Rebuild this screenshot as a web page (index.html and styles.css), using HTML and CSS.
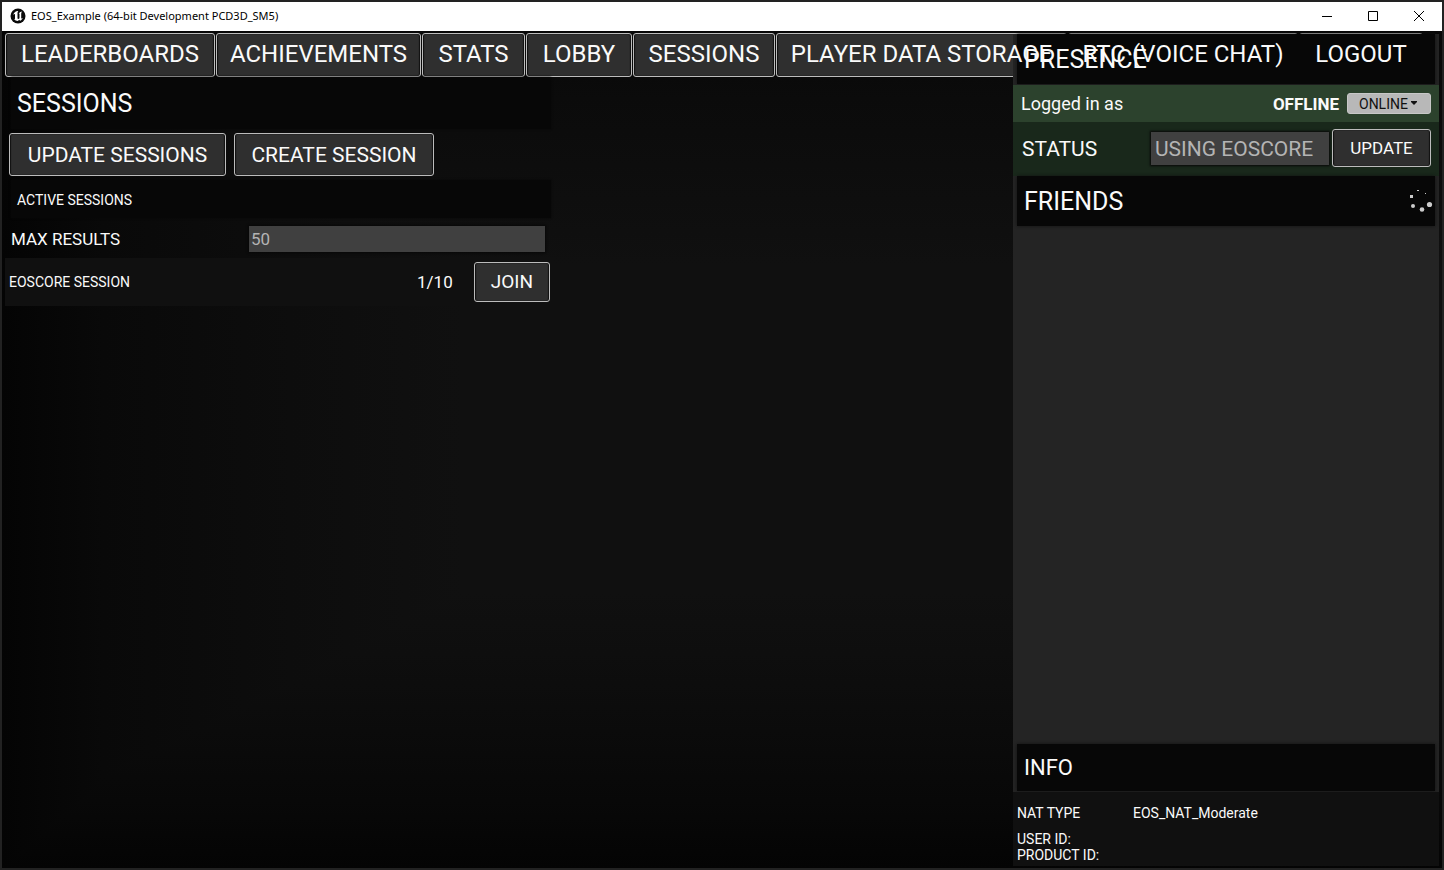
FILE: index.html
```html
<!DOCTYPE html>
<html lang="en">
<head>
<meta charset="utf-8">
<title>EOS_Example</title>
<link rel="stylesheet" href="styles.css">
</head>
<body>
<div class="window">
  <header class="titlebar">
    <svg class="logo" viewBox="0 0 16 16" width="16" height="16" aria-hidden="true">
      <circle cx="8" cy="8" r="7.5" fill="#0a0a0a"/>
      <path d="M7.3 2.9C5.2 3.5 3.6 5 3.1 6.9c.6-.7 1-1 1.4-1 .3 0 .5.3.5.7v4c0 .5-.4.6-1 .5.9 1.2 2.200 1.900 3.900 1.900l1.200-1.200 1.100.9c1.200-.6 2.100-1.600 2.600-2.900-.6.600-1 .8-1.300.7-.3-.1-.3-.3-.3-.6V5.800c0-1 .3-1.700 1-2.300-1.300.2-2.600.8-3.500 1.900.5 0 .8.100.8.600v4.300c-.4.500-.8.700-1.200.7-.5 0-.8-.2-.8-.7V5.200c0-1 .2-1.700.8-2.300z" fill="#fff"/>
    </svg>
    <span class="title">EOS_Example (64-bit Development PCD3D_SM5)</span>
    <div class="caption-buttons">
      <button class="caption" aria-label="Minimize"><svg width="10" height="10" viewBox="0 0 10 10"><path d="M0 5.500h10" stroke="#000"/></svg></button>
      <button class="caption" aria-label="Maximize"><svg width="10" height="10" viewBox="0 0 10 10"><path d="M.5.5h9v9h-9z" fill="none" stroke="#000"/></svg></button>
      <button class="caption" aria-label="Close"><svg width="10" height="10" viewBox="0 0 10 10"><path d="M0 0l10 10M10 0L0 10" stroke="#000"/></svg></button>
    </div>
  </header>

  <div class="screen">
    <nav class="tabs">
      <button class="btn tab"><span>LEADERBOARDS</span></button>
      <button class="btn tab"><span>ACHIEVEMENTS</span></button>
      <button class="btn tab"><span>STATS</span></button>
      <button class="btn tab"><span>LOBBY</span></button>
      <button class="btn tab"><span>SESSIONS</span></button>
      <button class="btn tab"><span>PLAYER DATA STORAGE</span></button>
      <button class="btn tab"><span>RTC (VOICE CHAT)</span></button>
      <button class="btn tab"><span>LOGOUT</span></button>
    </nav>

    <main class="content">
      <h1 class="bar bar-large">SESSIONS</h1>
      <div class="actions">
        <button class="btn action">UPDATE SESSIONS</button>
        <button class="btn action">CREATE SESSION</button>
      </div>
      <h2 class="bar bar-small">ACTIVE SESSIONS</h2>
      <div class="field">
        <label for="max">MAX RESULTS</label>
        <input class="box" id="max" type="text" value="50">
      </div>
      <div class="session">
        <span class="session-name">EOSCORE SESSION</span>
        <span class="session-count">1/10</span>
        <button class="btn join">JOIN</button>
      </div>
    </main>

    <aside class="side">
      <h2 class="head">PRESENCE</h2>
      <div class="login">
        <label class="who" for="presence">Logged in as</label>
        <strong class="state">OFFLINE</strong>
        <div class="picker">
          <select id="presence"><option>ONLINE</option><option>OFFLINE</option></select>
          <svg class="caret" width="6" height="4" viewBox="0 0 6 4" aria-hidden="true"><path d="M0 0h6v1L3 4 0 1z" fill="#111"/></svg>
        </div>
      </div>
      <div class="status">
        <label for="status">STATUS</label>
        <input class="box" id="status" type="text" value="USING EOSCORE">
        <button class="btn update">UPDATE</button>
      </div>
      <h2 class="head">FRIENDS
        <svg class="spinner" width="24" height="24" viewBox="0 0 24 24" aria-hidden="true" fill="#ccc">
          <circle cx="20.500" cy="15.500" r="2.600"/><circle cx="13" cy="20.500" r="2.300"/><circle cx="4" cy="17" r="2"/><rect x="1" y="6" width="3" height="3"/><rect x="8" y="1" width="2" height="1"/><rect x="16" y="4" width="1" height="1"/>
        </svg>
      </h2>
      <div class="friends"></div>
      <h2 class="head head-info">INFO</h2>
      <dl class="info">
        <div class="nat"><dt>NAT TYPE</dt><dd>EOS_NAT_Moderate</dd></div>
        <div><dt>USER ID:</dt></div>
        <div><dt>PRODUCT ID:</dt></div>
      </dl>
    </aside>
  </div>
</div>
</body>
</html>
```
FILE: styles.css
```css
* { box-sizing: border-box; }

body {
  margin: 0;
  background: #222;
  color: #fafafa;
  font-family: Roboto, "Liberation Sans", sans-serif;
}

button, input, select { font: inherit; color: inherit; }
h1, h2, dl, dd { margin: 0; font-weight: 400; }

.window {
  display: flex;
  flex-direction: column;
  min-height: 100vh;
  border: 2px solid #222;
  background: #050505;
}

.titlebar {
  display: flex;
  align-items: center;
  height: 29px;
  padding: 0 0 2px 8px;
  background: #fff;
  color: #000;
}
.title {
  flex: 1;
  margin-left: 5px;
  font: 11px/16px "Noto Sans", "Open Sans", sans-serif;
}
.caption-buttons { display: flex; }
.caption {
  display: grid;
  place-items: center;
  width: 46px;
  height: 26px;
  padding: 0;
  border: 0;
  background: none;
}

.screen {
  flex: 1;
  display: grid;
  grid-template-columns: minmax(0, 1fr) 426px;
  grid-template-rows: auto 1fr;
  padding: 2px 3px 2px 3px;
  background-color: #101010;
  background-image:
    linear-gradient(90deg, #040404, #090909 7%, #0d0d0d 20%, #101010 32%),
    linear-gradient(0deg, #040404, #080808 8%, #0d0d0d 22%, #101010 33%),
    linear-gradient(180deg, #080808, #0b0b0b 8%, #101010 28%);
  background-blend-mode: darken;
}

.btn {
  border: 1px solid #bcbcbc;
  border-radius: 3px;
  background: #2f2f2f;
  white-space: nowrap;
  box-shadow: inset 1px 0 1px #111, inset -1px 0 1px #111;
}

.tabs {
  grid-area: 1 / 1 / 2 / 3;
  display: grid;
  grid-template-columns: 210px 205px 103px 106px 142px 291px 230px 124px;
  gap: 1px;
}
.tab {
  height: 44px;
  padding: 0 0 2px;
  font-size: 24px;
  line-height: 28px;
}
/* Tab labels stay readable above the side panel */
.tab span { position: relative; z-index: 2; }

.content {
  grid-area: 2 / 1;
  width: 548px;
}
.bar {
  display: flex;
  align-items: center;
  margin: 0 2px 0 6px;
  padding: 0 6px;
  background: #070707;
  box-shadow: 0 0 2px #070707;
}
.bar-large { height: 52px; font-size: 25px; }
.bar-small { height: 38px; padding-top: 2px; font-size: 14px; }
.actions {
  display: grid;
  grid-template-columns: 217px 200px;
  gap: 8px;
  padding: 4px;
}
.action {
  height: 43px;
  padding: 0;
  font-size: 21px;
}
.field {
  display: grid;
  grid-template-columns: 238px 1fr;
  align-items: center;
  height: 40px;
  padding: 2px 8px 0 6px;
  font-size: 17px;
}
.box {
  min-width: 0;
  border: 0;
  border-radius: 0;
  background: #404040;
  color: #b4b4b4;
  box-shadow: 0 0 2px 1px #080808;
}
.field .box { height: 26px; padding: 0 2px; }
.session {
  display: flex;
  align-items: center;
  height: 48px;
  padding: 0 3px 0 4px;
  background: #101010;
}
.session-name { flex: 1; font-size: 14px; }
.session-count { margin-right: 21px; font-size: 17px; }
.join { height: 40px; padding: 0 16px 2px; font-size: 19px; }

.side {
  grid-area: 1 / 2 / 3 / 3;
  z-index: 1;
  display: flex;
  flex-direction: column;
  margin-top: 1px;
  background: #242424;
}
.head {
  display: flex;
  align-items: center;
  justify-content: space-between;
  height: 50px;
  margin: 0 4px;
  padding: 0 2px 0 7px;
  background: #070707;
  box-shadow: 0 0 3px #111;
  font-size: 25px;
}
.login {
  display: flex;
  align-items: center;
  height: 37px;
  margin-top: 1px;
  padding: 0 8px;
  background: #2c422d;
}
.who { flex: 1; font-size: 18px; }
.state { margin-right: 8px; font-size: 17px; font-weight: 700; }
.picker { position: relative; width: 84px; height: 21px; }
.picker select {
  appearance: none;
  width: 100%;
  height: 100%;
  padding: 0 11px;
  border: 1px solid #c8c8c8;
  border-radius: 3px;
  background: #b8b8b8;
  color: #111;
  font-size: 14px;
  line-height: 18px;
}
.caret { position: absolute; top: 8px; right: 14px; }
.status {
  display: flex;
  align-items: center;
  height: 54px;
  padding: 0 8px 2px 9px;
  background: #19281b;
  font-size: 21px;
}
.status label { flex: 1; padding-top: 2px; }
.status .box { width: 178px; height: 33px; margin-right: 3px; padding: 2px 4px 0; }
.update { width: 99px; height: 38px; padding: 0; font-size: 17px; }
.friends { flex: 1; }
.head-info { height: 47px; font-size: 22px; }
.info {
  margin-top: 1px;
  padding: 13px 4px 3px;
  background: #101010;
  font-size: 14px;
  line-height: 16px;
}
.nat {
  display: grid;
  grid-template-columns: 116px 1fr;
  margin-bottom: 10px;
}
```
